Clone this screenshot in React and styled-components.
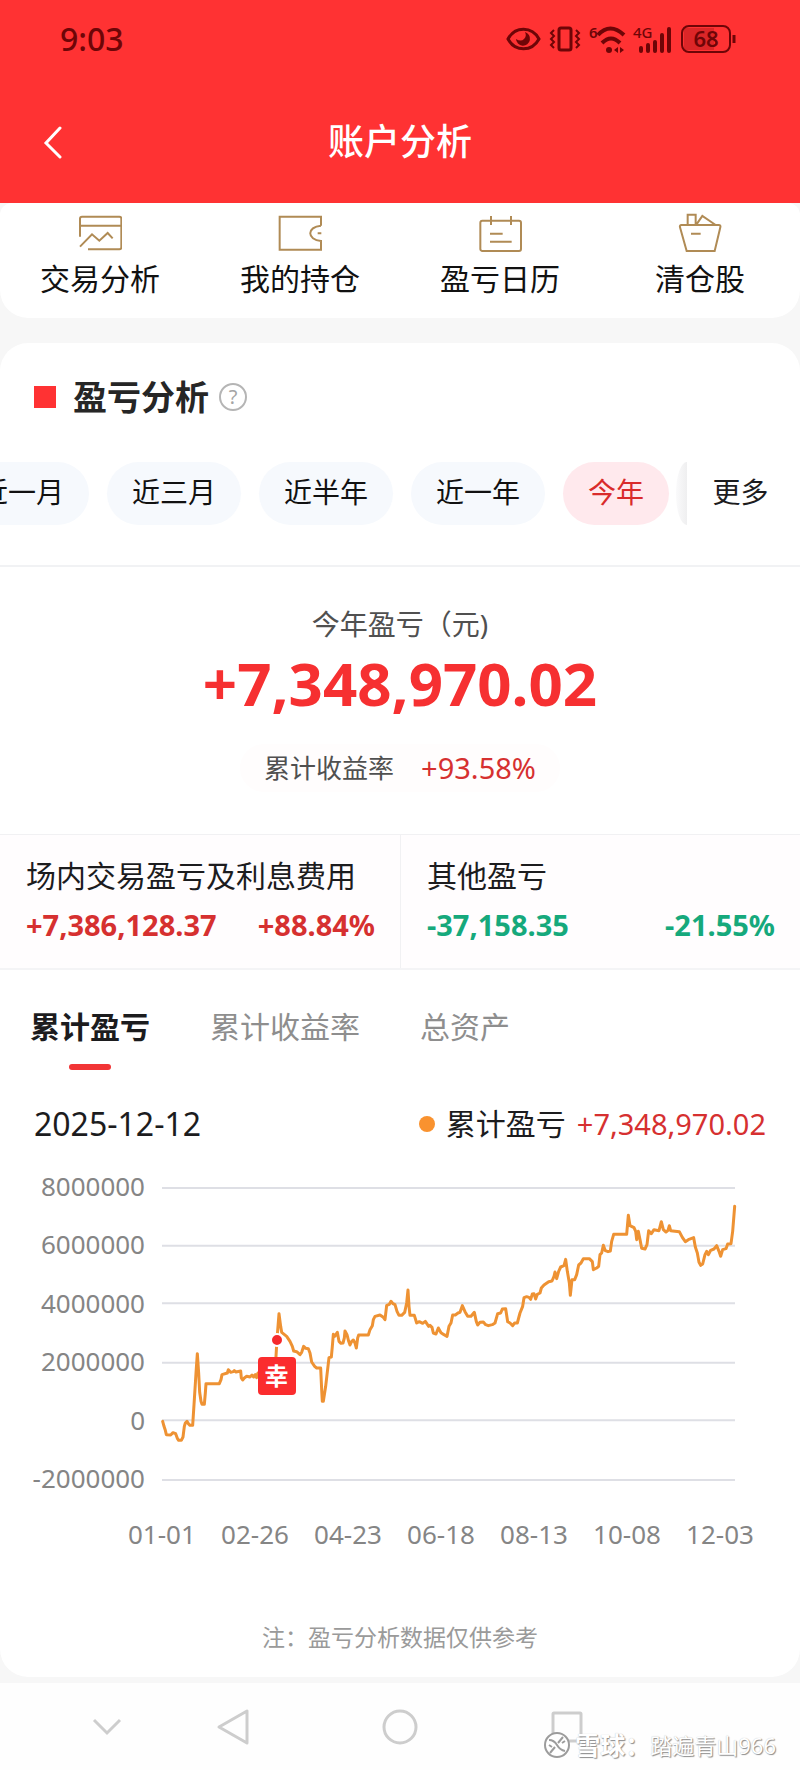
import React, { useState } from 'react';
import styled, { createGlobalStyle } from 'styled-components';

const GlobalStyle = createGlobalStyle`
    * {
        box-sizing: border-box;
    }

    body {
        margin: 0;
        background: #f7f7f7;
        color: #1c1c1e;
        font-family: 'Noto Sans', 'Noto Sans CJK SC', sans-serif;
    }

    h1, h2, p {
        margin: 0;
    }

    button {
        margin: 0;
        padding: 0;
        border: 0;
        background: none;
        color: inherit;
        font: inherit;
        cursor: pointer;
    }
`;

const Header = styled.header`
    background: #ff3233;
`;

const StatusBar = styled.div`
    display: flex;
    align-items: center;
    justify-content: space-between;
    height: 80px;
    padding: 0 64px 2px 60px;
    color: #6e0507;
`;

const Clock = styled.span`
    font-size: 32px;
    line-height: 40px;
    font-weight: 500;
`;

const StatusIcons = styled.div`
    display: flex;
    align-items: center;
    gap: 8px;

    svg {
        display: block;
        overflow: visible;
    }
`;

const TitleBar = styled.div`
    display: grid;
    grid-template-columns: 80px 1fr 80px;
    align-items: center;
    height: 123px;
    color: #fff;
`;

const BackButton = styled.button`
    display: flex;
    padding: 10px 16px 10px 40px;
`;

const Title = styled.h1`
    font-size: 36px;
    line-height: 48px;
    font-weight: 500;
    text-align: center;
`;

const Shortcuts = styled.nav`
    display: grid;
    grid-template-columns: repeat(4, 1fr);
    padding: 9px 0 21px;
    border-radius: 12px 12px 28px 28px;
    background: #fff;
`;

const Shortcut = styled.a`
    display: flex;
    flex-direction: column;
    align-items: center;
    gap: 9px;
    color: #111;
    font-size: 30px;
    line-height: 36px;
    text-decoration: none;

    svg {
        width: 44px;
        height: 40px;
        fill: none;
        stroke: #b08b55;
        stroke-width: 6;
    }
`;

const Card = styled.main`
    margin: 25px 0 6px;
    padding: 32px 0 24px;
    border-radius: 28px;
    background: #fff;
`;

const CardHead = styled.div`
    display: flex;
    align-items: center;
    padding: 0 34px;
`;

const Square = styled.span`
    width: 22px;
    height: 22px;
    margin-right: 17px;
    background: #ff3233;
`;

const CardTitle = styled.h2`
    font-size: 34px;
    line-height: 44px;
    font-weight: 700;
    color: #262626;
`;

const HelpButton = styled.button`
    width: 28px;
    height: 28px;
    margin-left: 10px;
    border: 2px solid #b5b5b5;
    border-radius: 50%;
    color: #a5a5a5;
    font-size: 20px;
    line-height: 24px;
`;

const RangeBar = styled.div`
    display: flex;
    margin: 43px 0 40px;
`;

const RangeScroll = styled.div`
    display: flex;
    flex: 1;
    gap: 18px;
    min-width: 0;
    overflow: hidden;
`;

const Pill = styled.button`
    flex: none;
    height: 63px;
    padding: 0 25px 3px;
    border-radius: 32px;
    background: ${ props => props.$active ? '#ffe9ed' : '#f6f9fd' };
    color: ${ props => props.$active ? '#d92b2b' : '#111' };
    font-size: 28px;
    line-height: 36px;

    &:first-child {
        margin-left: -45px;
    }
`;

const PillEdge = styled.span`
    flex: none;
    width: 11px;
    height: 63px;
    border-radius: 11px 0 0 11px / 32px 0 0 32px;
    background: linear-gradient(90deg, #fafafb, #efeff0);
`;

const MoreButton = styled.button`
    flex: none;
    width: 113px;
    padding: 0 31px 3px 25px;
    font-size: 28px;
    line-height: 36px;
`;

const Summary = styled.section`
    display: flex;
    flex-direction: column;
    align-items: center;
    padding: 39px 0 42px;
    border-top: 2px solid #f1f2f4;
`;

const Caption = styled.p`
    color: #505050;
    font-size: 28px;
    line-height: 36px;
`;

const Total = styled.p`
    color: #f63031;
    font-size: 60px;
    line-height: 82px;
    font-weight: 700;
`;

const Rate = styled.div`
    display: flex;
    align-items: center;
    gap: 27px;
    height: 48px;
    margin-top: 20px;
    padding: 0 24px;
    border-radius: 24px;
    background: #fffdfd;
    color: #505050;
    font-size: 26px;
    line-height: 36px;
`;

const Amount = styled.span`
    color: ${ props => props.$down ? '#16a97c' : '#d63030' };
    font-size: 29px;
    line-height: 40px;
    font-weight: ${ props => props.$bold ? 700 : 400 };
`;

const Split = styled.section`
    display: grid;
    grid-template-columns: 1fr 1fr;
    border-top: 1px solid #f1f1f3;
    border-bottom: 2px solid #f4f4f6;
    background: #fffdfe;
`;

const SplitCell = styled.div`
    padding: 21px 25px 23px 26px;
    font-size: 30px;
    line-height: 40px;

    & + & {
        border-left: 1px solid #f1f1f3;
    }
`;

const SplitValues = styled.div`
    display: flex;
    justify-content: space-between;
    margin-top: 9px;
`;

const Tabs = styled.div`
    display: flex;
    gap: 60px;
    padding: 35px 30px 0;
`;

const Tab = styled.button`
    display: flex;
    flex-direction: column;
    align-items: center;
    color: ${ props => props.$active ? '#1c1c1e' : '#8e8e8e' };
    font-size: 30px;
    line-height: 44px;
    font-weight: ${ props => props.$active ? 700 : 400 };

    &::after {
        content: '';
        width: 42px;
        height: 6px;
        margin-top: 15px;
        border-radius: 3px;
        background: ${ props => props.$active ? '#f23536' : 'transparent' };
    }
`;

const Legend = styled.div`
    display: flex;
    align-items: center;
    justify-content: space-between;
    padding: 34px 34px 0;
    font-size: 30px;
    line-height: 40px;
`;

const LegendDate = styled.time`
    font-size: 32px;
`;

const LegendItem = styled.div`
    display: flex;
    align-items: center;
    gap: 11px;
`;

const Dot = styled.span`
    width: 16px;
    height: 16px;
    border-radius: 50%;
    background: #f9922f;
`;

const ChartBody = styled.div`
    display: flex;
    gap: 17px;
    margin-top: 24px;
    padding: 0 65px 0 24px;
`;

const YAxis = styled.div`
    display: flex;
    flex-direction: column;
    justify-content: space-between;
    flex: none;
    width: 121px;
    height: 328px;
    color: #858585;
    font-size: 26px;
    line-height: 36px;
    text-align: right;
`;

const Plot = styled.div`
    position: relative;
    flex: 1;
    height: 292px;
    margin: 20px 0;

    svg {
        display: block;
        width: 100%;
        height: 100%;
        overflow: visible;
    }
`;

const MarkerDot = styled.span`
    position: absolute;
    left: 20%;
    top: 52%;
    width: 14px;
    height: 14px;
    margin: -7px 0 0 -7px;
    border: 2px solid #fff;
    border-radius: 50%;
    background: #f5292c;
`;

const MarkerTag = styled.span`
    position: absolute;
    left: 20%;
    top: 58%;
    width: 38px;
    height: 38px;
    margin-left: -19px;
    border-radius: 4px;
    background: #fb2c2e;
    color: #fff;
    font-size: 24px;
    line-height: 37px;
    font-weight: 700;
    text-align: center;
`;

const XAxis = styled.div`
    display: flex;
    justify-content: space-between;
    margin-top: 16px;
    padding: 0 46px 0 128px;
    color: #858585;
    font-size: 26px;
    line-height: 36px;
`;

const Note = styled.p`
    margin-top: 69px;
    color: #9a9a9a;
    font-size: 23px;
    line-height: 32px;
    text-align: center;
`;

const SystemNav = styled.footer`
    position: relative;
    display: grid;
    grid-template-columns: 150px 1fr 1fr 1fr 150px;
    align-items: center;
    height: 87px;
    background: #fefefe;

    svg {
        display: block;
        fill: none;
        stroke: #cdcdcd;
        stroke-width: 3;
    }
`;

const NavButton = styled.button`
    display: flex;
    justify-content: center;

    &:first-child {
        padding-left: 64px;
    }
`;

const Watermark = styled.div`
    position: absolute;
    right: 24px;
    bottom: 8px;
    display: flex;
    align-items: center;
    color: #fff;
    font-size: 22px;
    line-height: 34px;
    text-shadow: 1px 1px 1px #8c8c8c, 0 0 1px #bdbdbd;

    svg {
        margin-right: 4px;
        stroke: #9c9c9c;
        stroke-width: 2;
    }

    b {
        font-size: 25px;
    }
`;

const shortcuts = [
    {
        name: '交易分析',
        icon: <path d="M6 74V20q0-6 6-6h112q6 0 6 6v86q0 6-6 6H30M6 41h124M6 104l36-37 22 19 25-23 15 16" />
    },
    {
        name: '我的持仓',
        icon: <path d="M129 41V14H5v99h124V87C86 84 86 44 129 41M119 64h11" />
    },
    {
        name: '盈亏日历',
        icon: (
            <>
                <rect x="7" y="26" width="122" height="91" rx="6" />
                <path d="M39 12v27M99 12v27M36 65h38M36 89h65" />
            </>
        )
    },
    {
        name: '清仓股',
        icon: <path d="M11 39h111q7 0 5 7l-17 71H26L6 46q-2-7 5-7zM39 65h29M29 39V8h24v31M55 38l18-26 40 27" />
    }
];

const ranges = ['近一月', '近三月', '近半年', '近一年', '今年'];
const tabs = ['累计盈亏', '累计收益率', '总资产'];
const yLabels = ['8000000', '6000000', '4000000', '2000000', '0', '-2000000'];
const xLabels = ['01-01', '02-26', '04-23', '06-18', '08-13', '10-08', '12-03'];
const gridLines = [85, 258, 431, 609, 782, 961];

const linePoints = `
    68,785 72,800 76,812 79,825 92,826 99,819 107,822 112,836 116,842 124,842 129,832 133,800
    136,790 141,785 145,792 150,797 158,797 163,720 168,640 172,582 176,640 179,698 183,725
    186,734 193,734 196,700 198,672 212,672 238,672 243,660 246,645 262,640 265,630 272,638
    280,636 283,633 288,637 302,634 304,655 308,661 313,655 320,650 330,652 336,646 341,652
    346,645 350,654 354,640 380,644 400,640 405,620 408,590 411,537 414,500 417,462 422,500
    425,518 440,530 450,545 457,560 461,574 470,576 480,585 485,578 491,560 497,566 505,567
    510,580 515,607 524,620 530,625 542,625 545,690 547,725 550,725 557,680 567,594 574,592
    577,560 580,524 584,530 592,518 597,545 603,551 609,550 613,535 615,514 621,525 626,545
    630,556 635,545 640,541 645,550 649,565 653,535 656,526 685,526 690,510 697,498 700,480
    705,470 720,466 730,473 735,480 740,437 748,434 753,425 759,432 765,435 771,455 777,467
    785,467 794,458 800,430 804,391 807,440 810,467 823,467 830,490 838,486 848,491 856,485
    862,494 866,500 870,497 876,503 880,520 888,523 895,505 903,519 912,525 921,530 927,500
    933,490 938,466 946,466 954,460 960,458 967,438 975,456 983,470 993,470 1003,458 1009,486
    1013,496 1020,488 1030,487 1037,495 1045,498 1057,495 1065,490 1073,462 1082,460 1087,448
    1097,447 1103,486 1110,490 1118,498 1124,490 1132,490 1140,460 1148,440 1152,414 1160,411
    1167,413 1172,419 1177,403 1182,402 1187,418 1192,404 1200,400 1204,385 1212,376 1226,366
    1236,364 1242,350 1245,337 1250,357 1256,335 1262,322 1272,318 1277,299 1282,335 1288,370
    1291,407 1296,360 1304,360 1310,345 1316,316 1323,310 1330,297 1348,297 1357,306 1360,330
    1370,325 1376,320 1380,285 1385,280 1390,257 1396,273 1404,276 1411,274 1415,245 1421,224
    1460,224 1465,167 1470,198 1482,204 1487,215 1490,240 1495,215 1500,240 1505,266 1515,268
    1521,255 1526,213 1534,222 1542,210 1557,213 1564,186 1570,210 1578,217 1584,212 1588,198
    1592,213 1618,216 1627,233 1636,246 1645,240 1661,234 1666,262 1672,280 1677,308 1682,317
    1688,313 1695,285 1700,275 1705,285 1712,272 1722,268 1730,258 1737,275 1742,290 1748,270
    1758,267 1763,253 1773,252 1778,215 1784,140
`;

const SignalIcons = () => (
    <StatusIcons>
        <svg width="35" height="26" viewBox="0 0 35 26" fill="none">
            <path d="M2 13C9 0 26 0 33 13 26 26 9 26 2 13z" stroke="currentColor" strokeWidth="3" />
            <path d="M19 6a7 7 0 1 1-9 7q5 3 8 0t1-7z" fill="currentColor" />
        </svg>
        <svg width="32" height="28" viewBox="0 0 32 28" fill="none" stroke="currentColor" strokeWidth="2">
            <rect x="10" y="3" width="12" height="22" rx="2" strokeWidth="3" />
            <path d="M5 5l-3 3 3 3-3 3 3 3-3 3 3 3M27 5l3 3-3 3 3 3-3 3 3 3-3 3" />
        </svg>
        <svg width="36" height="40" viewBox="0 -6 36 40" fill="none" stroke="currentColor" strokeWidth="4">
            <text x="0" y="13" fill="currentColor" stroke="none" fontSize="15" fontWeight="600">6</text>
            <path d="M9 10q12-13 26 0M13 18q9-9 18 0" />
            <circle cx="20" cy="25" r="3" fill="currentColor" stroke="none" />
            <path d="M29 22v6l-4-3zM31 22v6l4-3z" fill="currentColor" stroke="none" />
        </svg>
        <svg width="39" height="40" viewBox="0 -6 39 40" fill="none" stroke="currentColor" strokeWidth="4" strokeLinecap="round">
            <text x="0" y="13" fill="currentColor" stroke="none" fontSize="15" fontWeight="500">4G</text>
            <path d="M8 23v3M15 20v6M22 17v9M29 10v16M36 4v22" />
        </svg>
        <svg width="56" height="40" viewBox="0 -6 56 40" fill="none">
            <path d="M4 3h30v22H4z" fill="currentColor" opacity="0.25" />
            <rect x="2" y="1" width="48" height="26" rx="7" stroke="currentColor" strokeWidth="2" />
            <path d="M54 10v8" stroke="currentColor" strokeWidth="3" />
            <text x="26" y="22" fill="currentColor" fontSize="22" fontWeight="600" textAnchor="middle">68</text>
        </svg>
    </StatusIcons>
);

const ProfitChart = () => (
    <>
        <ChartBody>
            <YAxis>
                { yLabels.map((label) => <span key={label}>{ label }</span>) }
            </YAxis>
            <Plot>
                <svg viewBox="66 85 1719 876" preserveAspectRatio="none" fill="none">
                    {
                        gridLines.map((y) => (
                            <path key={y} d={`M66 ${ y }H1785`} stroke="#dedfe5" strokeWidth="2" vectorEffect="non-scaling-stroke" />
                        ))
                    }
                    <polyline
                        points={linePoints}
                        stroke="#ee9233"
                        strokeWidth="3"
                        strokeLinejoin="round"
                        strokeLinecap="round"
                        vectorEffect="non-scaling-stroke"
                    />
                </svg>
                <MarkerTag>幸</MarkerTag>
                <MarkerDot />
            </Plot>
        </ChartBody>
        <XAxis>
            { xLabels.map((label) => <span key={label}>{ label }</span>) }
        </XAxis>
    </>
);

const App = () => {

    const [ range, setRange ] = useState('今年');
    const [ tab, setTab ] = useState('累计盈亏');

    return (
        <>
            <GlobalStyle />

            <Header>
                <StatusBar>
                    <Clock>9:03</Clock>
                    <SignalIcons />
                </StatusBar>
                <TitleBar>
                    <BackButton aria-label="返回">
                        <svg width="24" height="34" viewBox="0 0 24 34" fill="none" stroke="#fff" strokeWidth="3" strokeLinecap="round">
                            <path d="M20 3L6 18l14 14" />
                        </svg>
                    </BackButton>
                    <Title>账户分析</Title>
                </TitleBar>
            </Header>

            <Shortcuts>
                {
                    shortcuts.map((item) => (
                        <Shortcut key={item.name} href="#">
                            <svg viewBox="0 0 132 120">{ item.icon }</svg>
                            { item.name }
                        </Shortcut>
                    ))
                }
            </Shortcuts>

            <Card>
                <CardHead>
                    <Square />
                    <CardTitle>盈亏分析</CardTitle>
                    <HelpButton aria-label="说明">?</HelpButton>
                </CardHead>

                <RangeBar>
                    <RangeScroll>
                        {
                            ranges.map((name) => (
                                <Pill key={name} $active={name === range} onClick={() => setRange(name)}>{ name }</Pill>
                            ))
                        }
                    </RangeScroll>
                    <PillEdge />
                    <MoreButton>更多</MoreButton>
                </RangeBar>

                <Summary>
                    <Caption>今年盈亏（元)</Caption>
                    <Total>+7,348,970.02</Total>
                    <Rate>
                        累计收益率
                        <Amount>+93.58%</Amount>
                    </Rate>
                </Summary>

                <Split>
                    <SplitCell>
                        场内交易盈亏及利息费用
                        <SplitValues>
                            <Amount $bold>+7,386,128.37</Amount>
                            <Amount $bold>+88.84%</Amount>
                        </SplitValues>
                    </SplitCell>
                    <SplitCell>
                        其他盈亏
                        <SplitValues>
                            <Amount $bold $down>-37,158.35</Amount>
                            <Amount $bold $down>-21.55%</Amount>
                        </SplitValues>
                    </SplitCell>
                </Split>

                <Tabs>
                    {
                        tabs.map((name) => (
                            <Tab key={name} $active={name === tab} onClick={() => setTab(name)}>{ name }</Tab>
                        ))
                    }
                </Tabs>

                <Legend>
                    <LegendDate>2025-12-12</LegendDate>
                    <LegendItem>
                        <Dot />
                        累计盈亏
                        <Amount>+7,348,970.02</Amount>
                    </LegendItem>
                </Legend>

                <ProfitChart />

                <Note>注：盈亏分析数据仅供参考</Note>
            </Card>

            <SystemNav>
                <NavButton aria-label="收起">
                    <svg width="30" height="20" viewBox="0 0 30 20"><path d="M2 3l13 13L28 3" /></svg>
                </NavButton>
                <NavButton aria-label="后退">
                    <svg width="34" height="38" viewBox="0 0 34 38"><path d="M31 3v32L3 19z" strokeLinejoin="round" /></svg>
                </NavButton>
                <NavButton aria-label="主页">
                    <svg width="36" height="36" viewBox="0 0 36 36"><circle cx="18" cy="18" r="16" /></svg>
                </NavButton>
                <NavButton aria-label="最近">
                    <svg width="32" height="32" viewBox="0 0 32 32"><rect x="2" y="2" width="28" height="28" rx="1" /></svg>
                </NavButton>
                <Watermark>
                    <svg width="28" height="28" viewBox="0 0 28 28">
                        <circle cx="14" cy="14" r="12" fill="#fff" />
                        <path d="M6 9q5 0 8 5t8 6M20 6l-5 6M12 16l-5 6M6 14l3 2M19 12l3-2" />
                    </svg>
                    <b>雪球：</b>
                    踏遍青山966
                </Watermark>
            </SystemNav>
        </>
    );
};

export default App;
